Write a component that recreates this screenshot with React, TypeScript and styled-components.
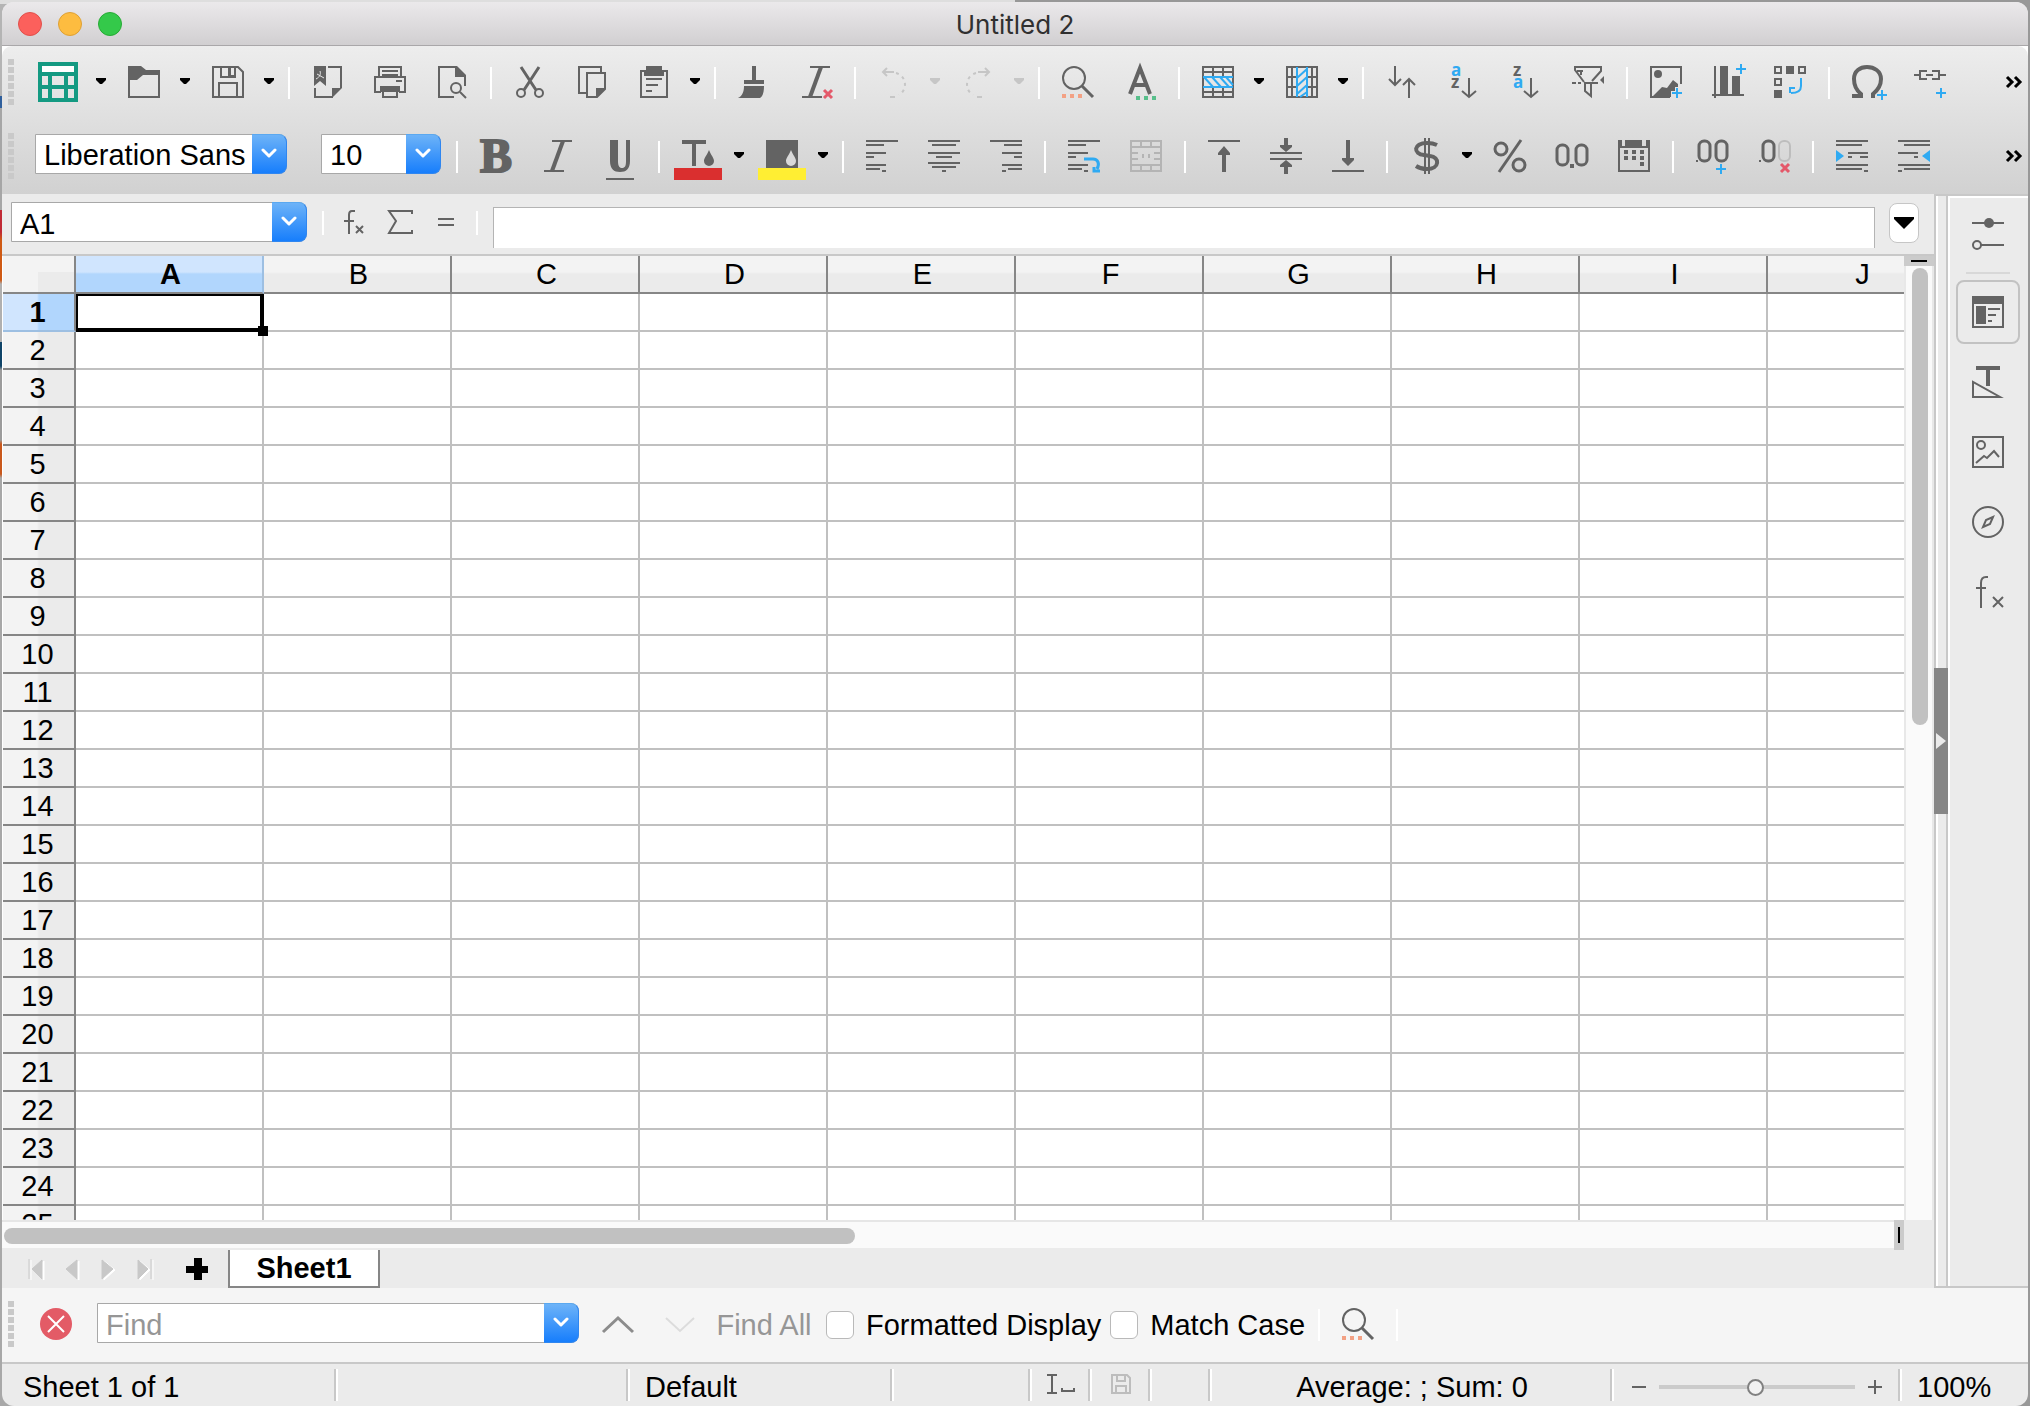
import React from "react";
import styled, { createGlobalStyle, css } from "styled-components";

const INK = "#636363";
const BLUE = "#2faaf2";
const RED = "#e4596a";
const UI_FONT = '"Liberation Sans", Arial, sans-serif';

const GlobalStyle = createGlobalStyle`
  * { box-sizing: border-box; }
  body {
    margin: 0;
    background:
      linear-gradient(to right, transparent 50%, #989898 50%),
      linear-gradient(#dedede 0 4px, #b4b4b4 4px 96px, #2f5f9c 96px 108px, #a6a6a6 108px 210px,
        #c02a35 210px 232px, #cf5a14 240px 280px, #b0b0b0 284px 342px, #0f4468 342px 366px,
        #9c9c9c 370px 440px, #c9581c 444px 474px, #a8a8a8 478px);
    overflow: hidden;
    font-family: ${UI_FONT};
  }
  button, input, select { font: inherit; color: inherit; margin: 0; }
`;

/* ---------- window frame ---------- */

const Desktop = styled.div`
  height: 100vh;
  padding: 2px 2px 0;
`;

const Window = styled.main`
  display: flex;
  flex-direction: column;
  height: 100%;
  overflow: hidden;
  border-radius: 12px;
  background: #ebebeb;
  color: #000;
  font-size: 29px;
  line-height: 32px;
`;

const TitleBar = styled.header`
  display: grid;
  grid-template-columns: 1fr auto 1fr;
  align-items: center;
  flex: none;
  height: 44px;
  padding: 0 16px;
  border-bottom: 1px solid #a9a7a9;
  background: linear-gradient(#ebe9eb, #d1cfd1);
`;

const Lights = styled.div`
  display: flex;
  gap: 16px;
`;

const Light = styled.button<{ $fill: string; $edge: string }>`
  width: 24px;
  height: 24px;
  padding: 0;
  border: 1px solid ${(p) => p.$edge};
  border-radius: 50%;
  background: ${(p) => p.$fill};
`;

const Title = styled.h1`
  margin: 0;
  padding-top: 2px;
  font: 400 26px/32px Inter, "Liberation Sans", sans-serif;
  color: #303030;
`;

/* ---------- toolbars ---------- */

const ToolbarBack = styled.div`
  flex: none;
  background: #fff;
`;

const Toolbars = styled.div`
  border-radius: 10px 10px 0 0;
  background: linear-gradient(#ededed, #d1d1d1);
`;

const ToolRow = styled.div`
  display: flex;
  align-items: center;
  height: 74px;
  padding: 0 0 2px 6px;
`;

const Grip = styled.span<{ $after: number }>`
  flex: none;
  width: 6px;
  height: 46px;
  margin-right: ${(p) => p.$after}px;
  background: repeating-linear-gradient(#c9c9c9 0 6px, transparent 6px 8px);
`;

const Separator = styled.span<{ $h?: number }>`
  flex: none;
  width: 2px;
  height: ${(p) => p.$h ?? 32}px;
  margin: 2px 7px 0;
  background: #fff;
`;

const flatButton = css`
  display: flex;
  align-items: center;
  justify-content: center;
  flex: none;
  padding: 0;
  border: 0;
  background: none;
  svg { display: block; overflow: visible; }
`;

const ToolButton = styled.button<{ $w?: number }>`
  ${flatButton}
  width: ${(p) => p.$w ?? 62}px;
  height: 48px;
`;

const ArrowButton = styled.button`
  ${flatButton}
  width: 22px;
  height: 48px;
  padding: 0 2px 2px 0;
`;

const MoreButton = styled.button`
  ${flatButton}
  width: 28px;
  height: 48px;
  margin-left: auto;
`;

/* ---------- combo boxes ---------- */

const Combo = styled.div<{ $w: number; $after?: number }>`
  position: relative;
  display: flex;
  flex: none;
  width: ${(p) => p.$w}px;
  height: 40px;
  margin-right: ${(p) => p.$after ?? 0}px;
`;

const ToolCombo = styled(Combo)`
  margin-bottom: 4px;
`;

const fieldStyle = css`
  flex: 1;
  min-width: 0;
  height: 40px;
  border: 1px solid #a8a8a8;
  border-radius: 0 8px 8px 0;
  background: #fff;
  outline: 0;
`;

const ComboSelect = styled.select`
  ${fieldStyle}
  appearance: none;
  padding: 2px 0 0 8px;
`;

const ComboInput = styled.input`
  ${fieldStyle}
  padding: 4px 0 0 8px;
  &::placeholder { color: #969696; opacity: 1; }
`;

const comboCap = css`
  position: absolute;
  top: 0;
  right: 0;
  display: flex;
  align-items: center;
  justify-content: center;
  width: 35px;
  height: 40px;
  padding: 0 0 2px;
  border: 1px solid #2f86f0;
  border-top-color: #5aa8f0;
  border-left: 0;
  border-radius: 0 8px 8px 0;
  background: linear-gradient(#6db3f8, #177efc);
`;

const ComboCap = styled.span`
  ${comboCap}
  pointer-events: none;
`;

const ComboButton = styled.button`
  ${comboCap}
`;

/* ---------- work area ---------- */

const Work = styled.div`
  display: flex;
  flex: 1;
  min-height: 0;
`;

const Document = styled.section`
  display: flex;
  flex-direction: column;
  flex: 1;
  min-width: 0;
`;

const FormulaBar = styled.div`
  display: flex;
  align-items: center;
  flex: none;
  height: 62px;
  padding: 0 15px 4px 9px;
  border-bottom: 2px solid #c8c8c8;
`;

const FormulaInput = styled.input`
  flex: 1;
  min-width: 0;
  height: 41px;
  margin: 10px 14px 0 8px;
  padding: 0 8px;
  border: 1px solid #b4b4b4;
  border-bottom: 0;
  background: #fff;
  outline: 0;
`;

const ExpandButton = styled.button`
  ${flatButton}
  width: 30px;
  height: 40px;
  margin-top: 2px;
  border: 1px solid #c6c6c6;
  border-radius: 8px;
  background: #fff;
`;

const SheetArea = styled.div`
  display: flex;
  flex: 1;
  min-height: 0;
`;

const Viewport = styled.div`
  flex: 1;
  min-width: 0;
  overflow: hidden;
  padding-left: 1px;
  background: #fff;
`;

const Sheet = styled.table`
  table-layout: fixed;
  width: 1953px;
  border-collapse: separate;
  border-spacing: 0;
  line-height: 36px;
`;

const RowHeadCol = styled.col`
  width: 73px;
`;

const Corner = styled.th`
  height: 38px;
  padding: 0;
  border: solid #868686;
  border-width: 0 2px 2px 0;
  background: linear-gradient(#ebebeb, #ebebeb) 35px 16px no-repeat #f3f3f3;
`;

const ColHead = styled.th<{ $on: boolean }>`
  height: 38px;
  padding: 0 0 0 3px;
  border: solid #868686;
  border-width: 0 2px 2px 0;
  border-right-color: ${(p) => (p.$on ? "#9dbfe2" : "#868686")};
  background: ${(p) => (p.$on ? "linear-gradient(#d0e5fe 16px, #b1d6fd 18px)" : "linear-gradient(#f3f3f3 16px, #ebebeb 18px)")};
  font-weight: ${(p) => (p.$on ? 700 : 400)};
`;

const RowHead = styled.th<{ $on: boolean }>`
  height: 38px;
  padding: 0 2px 0 0;
  border: solid #868686;
  border-width: 0 2px 2px 0;
  border-bottom-color: ${(p) => (p.$on ? "#9dbfe2" : "#868686")};
  background: ${(p) => (p.$on ? "linear-gradient(to right, #d0e5fe 34px, #b1d6fd 36px)" : "linear-gradient(to right, #f3f3f3 34px, #ebebeb 36px)")};
  font-weight: ${(p) => (p.$on ? 700 : 400)};
`;

const Cell = styled.td`
  position: relative;
  height: 38px;
  padding: 0;
  border: solid #c0c0c0;
  border-width: 0 2px 2px 0;
`;

const CellCursor = styled.span`
  position: absolute;
  z-index: 1;
  inset: 0 -2px -2px 0;
  border: solid #000;
  border-width: 2px 4px 4px 2px;
  &::after {
    content: "";
    position: absolute;
    right: -8px;
    bottom: -8px;
    width: 10px;
    height: 10px;
    background: #000;
  }
`;

const VScroll = styled.div`
  display: flex;
  flex-direction: column;
  flex: none;
  width: 30px;
  border: solid #e8e8e8;
  border-width: 0 2px;
  background: #fafafa;
`;

const VSplit = styled.div`
  display: flex;
  align-items: center;
  justify-content: center;
  flex: none;
  height: 10px;
  margin: 0 -2px 2px;
  background: #cbcbcb;
  &::after { content: ""; width: 16px; height: 2px; background: #000; }
`;

const VTrack = styled.div`
  flex: 1;
  padding-left: 6px;
`;

const VThumb = styled.div`
  width: 16px;
  height: 48%;
  border-radius: 8px;
  background: #c1c1c1;
`;

const HScroll = styled.div`
  display: flex;
  flex: none;
  height: 28px;
  padding-right: 30px;
`;

const HTrack = styled.div`
  flex: 1;
  padding: 6px 0 0 2px;
  border-top: 2px solid #e6e6e6;
  background: #fafafa;
`;

const HThumb = styled.div`
  width: 45%;
  height: 16px;
  border-radius: 8px;
  background: #c1c1c1;
`;

const HSplit = styled.div`
  display: flex;
  align-items: center;
  justify-content: center;
  flex: none;
  width: 10px;
  height: 30px;
  background: #cbcbcb;
  &::after { content: ""; width: 2px; height: 16px; background: #000; }
`;

const Tabs = styled.nav`
  display: flex;
  flex: none;
  height: 40px;
  padding: 2px 0 0 16px;
`;

const NavButton = styled.button<{ $w: number }>`
  ${flatButton}
  width: ${(p) => p.$w}px;
`;

const AddButton = styled(NavButton)`
  padding: 0 0 0 4px;
`;

const SheetTab = styled.button`
  width: 152px;
  padding: 0;
  border: 2px solid #868686;
  border-top: 0;
  background: #fff;
  font-weight: 700;
  line-height: 34px;
`;

/* ---------- sidebar ---------- */

const Splitter = styled.div`
  position: relative;
  flex: none;
  width: 16px;
  border: solid #c8c8c8;
  border-width: 2px 0;
  background: linear-gradient(to right, #c8c8c8 0 2px, #fff 2px 4px, #ebebeb 4px 12px, #c8c8c8 12px 14px, #fff 14px);
`;

const SplitHandle = styled.button`
  ${flatButton}
  position: absolute;
  top: 50%;
  left: 0;
  width: 14px;
  height: 146px;
  margin-top: -73px;
  background: #868686;
`;

const Sidebar = styled.aside`
  display: flex;
  flex-direction: column;
  align-items: center;
  flex: none;
  width: 78px;
  gap: 6px;
  padding: 6px 2px 0 0;
  border: solid #c8c8c8;
  border-width: 2px 0;
  box-shadow: inset 0 2px #fff;
`;

const DeckButton = styled.button<{ $on?: boolean }>`
  ${flatButton}
  width: 64px;
  height: 64px;
  border: 2px solid ${(p) => (p.$on ? "#c2c2c2" : "transparent")};
  border-radius: 8px;
`;

const DeckLine = styled.span`
  flex: none;
  width: 44px;
  height: 2px;
  background: #d8d8d8;
`;

/* ---------- find bar and status bar ---------- */

const FindBar = styled.div`
  display: flex;
  align-items: center;
  flex: none;
  height: 76px;
  padding: 0 0 2px 6px;
  border-bottom: 2px solid #c8c8c8;
  background: #f5f5f5;
`;

const FindCombo = styled(Combo)`
  margin: 0 8px 2px 10px;
`;

const FindAll = styled.button`
  ${flatButton}
  width: 106px;
  padding-top: 2px;
  color: #969696;
`;

const Check = styled.label`
  display: flex;
  align-items: center;
  flex: none;
  gap: 12px;
  margin-left: 9px;
  padding-top: 2px;
`;

const CheckBox = styled.input`
  appearance: none;
  width: 28px;
  height: 28px;
  border: 1px solid #b9b9b9;
  border-radius: 6px;
  background: #fff;
`;

const FindTail = styled.div`
  display: flex;
  align-items: center;
  margin-left: 6px;
`;

const StatusBar = styled.footer`
  display: flex;
  align-items: center;
  flex: none;
  height: 42px;
`;

const StatusCell = styled.div<{ $w?: number; $center?: boolean; $last?: boolean }>`
  display: flex;
  align-items: center;
  flex: ${(p) => (p.$w ? "none" : "1")};
  justify-content: ${(p) => (p.$center ? "center" : "flex-start")};
  width: ${(p) => (p.$w ? `${p.$w}px` : "auto")};
  height: 32px;
  padding: ${(p) => (p.$center ? "4px 0 0" : "4px 0 0 15px")};
  border-right: ${(p) => (p.$last ? "0" : "2px solid #fff")};
  box-shadow: ${(p) => (p.$last ? "none" : "inset -2px 0 #c8c8c8")};
`;

const StatusLead = styled(StatusCell)`
  padding-left: 21px;
`;

const StatusIcon = styled(StatusCell)`
  padding: 0 0 2px;
`;

const ZoomButton = styled.button`
  ${flatButton}
  width: 14px;
  height: 20px;
`;

const ZoomSlider = styled.input`
  appearance: none;
  width: 196px;
  height: 20px;
  margin: 0 13px;
  background: linear-gradient(#cbcbcb, #cbcbcb) center / 100% 4px no-repeat;
  &::-webkit-slider-thumb {
    appearance: none;
    width: 17px;
    height: 17px;
    border: 2px solid #808080;
    border-radius: 50%;
    background: #f2f2f2;
  }
`;

/* ---------- icons ---------- */

type IconProps = { w?: number; h?: number; c?: string; children: React.ReactNode };
const Icon = ({ w = 32, h = 32, c = INK, children }: IconProps) => (
  <svg width={w} height={h} viewBox={`0 0 ${w} ${h}`} fill="none" stroke={c} strokeWidth={2} aria-hidden="true">
    {children}
  </svg>
);

const Fill = ({ d, c = INK }: { d: string; c?: string }) => <path d={d} fill={c} stroke="none" />;
const Plus = ({ x, y }: { x: number; y: number }) => <path d={`M${x - 5} ${y}h10M${x} ${y - 5}v10`} stroke={BLUE} />;
const Cross = ({ x, y }: { x: number; y: number }) => (
  <path d={`M${x - 4} ${y - 4}l8 8M${x + 4} ${y - 4}l-8 8`} stroke={RED} strokeWidth={3} />
);
/* Each bar is [y, from, to]. */
const Bars = ({ rows }: { rows: number[][] }) => <path d={rows.map(([y, a, b]) => `M${a} ${y}H${b}`).join("")} />;

const LEFT_BARS = [[1, 0, 32], [5, 0, 18], [13, 0, 20], [17, 0, 8], [25, 0, 20], [29, 0, 14], [31, 16, 20]];

const FindGlyph = (
  <>
    <circle cx="12" cy="12" r="11" />
    <path d="M20 20L31 31" strokeWidth="3" />
    <Fill d="M0 28h4v4h-4zM8 28h4v4h-4zM16 28h4v4h-4z" c="#f3a184" />
  </>
);

const undoPaths = (
  <>
    <path d="M9 2L5 6L9 10M5 6H16" />
    <path d="M18 7A12 12 0 0 1 21 29" strokeDasharray="3 4" />
    <path d="M12 31H17" />
  </>
);

const ITALIC = "M10 1H30M2 31H22";

const Letter = ({ y, c, children }: { y: number; c: string; children: string }) => (
  <text x="3" y={y} fontFamily="Open Sans, sans-serif" fontSize="17" fontWeight="700" fill={c} stroke="none">
    {children}
  </text>
);

const art: Record<string, React.ReactNode> = {
  calc: (
    <Icon w={44} h={40} c="#149a82">
      <Fill d="M3 3H37V11H3Z" c="#fff" />
      <path d="M2 2H38V38H2Z" strokeWidth="4" />
      <path d="M2 12H38M2 25H38M12 12V38M28 12V38" strokeWidth="4" />
    </Icon>
  ),
  open: (<Icon><path d="M1 12V31H31V6" /><Fill d="M0 0H13L18 4H32V9H15L9 14H0Z" /></Icon>),
  save: (<Icon><path d="M1 1H26L31 6V31H1ZM9 1V11H23V1M7 32V17H25V32" /><Fill d="M16 1H19V9H22V1H24V12H16Z" /></Icon>),
  pdf: (
    <Icon>
      <Fill d="M2 0H14V20L8 15L2 20Z" />
      <path d="M4 13C8 11 9 8 8 5M5 8L12 12" stroke="#e6e6e6" strokeWidth="1" />
      <path d="M16 1H29V22M3 22V31H21" />
      <Fill d="M20 32V22H30Z" />
    </Icon>
  ),
  print: (
    <Icon>
      <path d="M5 11V1H27V11M8 5H24M8 9H24M7 26H1V11H31V26H25M22 15H28M9 24V31H23V24" />
      <Fill d="M6 20H26V26H6Z" />
    </Icon>
  ),
  preview: (
    <Icon>
      <path d="M18 31H3V1H20M29 9V20" />
      <Fill d="M19 0H21L30 9V11H19Z" />
      <circle cx="20" cy="22" r="5" />
      <path d="M24 26L30 32" />
    </Icon>
  ),
  cut: (<Icon><path d="M7 1L22 24M25 1L10 24" strokeWidth="3" /><circle cx="7" cy="27" r="4" /><circle cx="25" cy="27" r="4" /></Icon>),
  copy: (<Icon><path d="M10 27H3V1H25V6M11 7H29V23L21 31H11Z" /><Fill d="M20 32V22H30Z" /></Icon>),
  paste: (<Icon><path d="M3 5H29V31H3ZM8 13H24M8 19H20M8 25H14" /><Fill d="M8 0H24V4H26V10H6V4H8Z" /></Icon>),
  brush: (<Icon><Fill d="M14 0H18V14H26V18H6V14H14ZM6 20H26C26 26 25 30 22 32H0C4 30 6 26 6 20Z" /></Icon>),
  clear: (<Icon><path d={ITALIC} /><path d="M21 1L10 31" strokeWidth="4" /><Cross x={28} y={28} /></Icon>),
  undo: (<Icon c="#c6c6c6">{undoPaths}</Icon>),
  redo: (<Icon c="#c6c6c6"><g transform="matrix(-1 0 0 1 32 0)">{undoPaths}</g></Icon>),
  find: (<Icon>{FindGlyph}</Icon>),
  spell: (
    <Icon>
      <path d="M6 28L16 2L26 28M9 19H23" strokeWidth="4" />
      <Fill d="M12 30h4v4h-4zM20 30h4v4h-4zM28 30h4v4h-4z" c="#58bf8b" />
    </Icon>
  ),
  row: (
    <Icon>
      <path d="M1 1H31V31H1ZM1 6H31M1 26H31M11 1V11M21 1V11M11 21V31M21 21V31" />
      <path d="M1 11H31M1 21H31M2 11L11 21M10 11L19 21M18 11L27 21M24 11L31 19" stroke={BLUE} />
    </Icon>
  ),
  column: (
    <Icon>
      <path d="M1 1H31V31H1ZM6 1V31M26 1V31M1 11H11M1 21H11M21 11H31M21 21H31" />
      <path d="M11 1V31M21 1V31M11 12L21 3M11 20L21 11M11 28L21 19M14 31L21 26" stroke={BLUE} />
    </Icon>
  ),
  sort: (<Icon><path d="M9 0V19M3 13L9 19L15 13M23 32V13M17 19L23 13L29 19" /></Icon>),
  sortAsc: (
    <Icon>
      <Letter y={10} c={BLUE}>a</Letter>
      <Letter y={22} c={INK}>z</Letter>
      <path d="M21 12V31M14 25L21 31L28 25" />
    </Icon>
  ),
  sortDesc: (
    <Icon>
      <Letter y={10} c={INK}>z</Letter>
      <Letter y={22} c={BLUE}>a</Letter>
      <path d="M21 12V31M14 25L21 31L28 25" />
    </Icon>
  ),
  filter: (
    <Icon>
      <path d="M12 16L3 4V1H29V5L20 15M11 5H5M9 5V9M0 17H4M6 17H9M12 17H26M13 17V25L19 30V17" />
      <Fill d="M28 14L32 10V18Z" />
    </Icon>
  ),
  image: (
    <Icon>
      <path d="M31 18V1H1V31H20" />
      <circle cx="8" cy="8" r="4" fill={INK} stroke="none" />
      <Fill d="M2 31L12 21L17 22L23 14L28 18V21H25V25H21V31Z" />
      <Plus x={27} y={27} />
    </Icon>
  ),
  chart: (<Icon><path d="M3 0V32M0 29H32" /><Fill d="M8 0H16V29H8ZM20 10H28V29H20Z" /><Plus x={29} y={3} /></Icon>),
  pivot: (
    <Icon>
      <path d="M1 1H7V7H1ZM25 1H31V7H25ZM1 13H7V19H1Z" />
      <Fill d="M12 0H20V8H12ZM0 24H8V32H0Z" />
      <path d="M27 12V20C27 25 24 27 17 27M16 21V27M15 22H21" stroke={BLUE} />
    </Icon>
  ),
  omega: (
    <Icon>
      <path d="M0 30H9V28C4 24 2 20 2 13C2 5 8 1 15 1S29 5 29 13C29 20 26 24 21 28V30H23" strokeWidth="4" />
      <Plus x={30} y={29} />
    </Icon>
  ),
  link: (<Icon><path d="M0 9H6M13 5H6V13H13M12 9H19M18 5H25V13H18M25 9H32" /><Plus x={27} y={27} /></Icon>),
  bold: (
    <Icon>
      <text x="0" y="32" fontFamily="Liberation Serif, serif" fontSize="48" fontWeight="700" fill={INK} stroke={INK} strokeWidth="2">B</text>
    </Icon>
  ),
  italic: (<Icon><path d={ITALIC} /><path d="M21 1L10 31" strokeWidth="4" /></Icon>),
  underline: (<Icon><Fill d="M6 0H14V21C14 27 16 28 18 28C21 28 22 26 22 21V0H26V21C26 29 22 32 16 32C10 32 6 29 6 21ZM2 38H30V40H2Z" /></Icon>),
  fontColor: (<Icon><Fill d="M0 0H24V4H14V26H10V4H0ZM27 10C29 15 32 18 32 21A5 5 0 0 1 22 21C22 18 25 15 27 10Z" /><Fill d="M-8 28H40V40H-8Z" c="#da2f2f" /></Icon>),
  highlight: (
    <Icon>
      <Fill d="M0 0H32V28H0Z" />
      <Fill d="M25 10C27 15 30 18 30 21A5 5 0 0 1 20 21C20 18 23 15 25 10Z" c="#d9d9d9" />
      <Fill d="M-8 28H40V40H-8Z" c="#ffee33" />
    </Icon>
  ),
  left: (<Icon><Bars rows={LEFT_BARS} /></Icon>),
  center: (<Icon><Bars rows={[[1, 0, 32], [5, 4, 28], [13, 0, 32], [17, 8, 24], [23, 0, 32], [27, 4, 28], [31, 14, 18]]} /></Icon>),
  right: (<Icon><Bars rows={[[1, 0, 32], [5, 14, 32], [13, 12, 32], [17, 24, 32], [25, 12, 32], [29, 18, 32], [31, 12, 16]]} /></Icon>),
  wrap: (<Icon><Bars rows={LEFT_BARS} /><path d="M16 19H25C30 19 32 24 29 29M26 27V31H32" stroke={BLUE} strokeWidth="3" /></Icon>),
  merge: (
    <Icon c="#b4b4b4">
      <path d="M1 1H31V31H1ZM1 7H31M1 25H31M11 1V8M21 1V8M11 25V31M21 25V31M1 13H8M1 19H8M24 13H31M24 19H31M13 14V18M19 14V18" />
    </Icon>
  ),
  top: (<Icon><path d="M0 1H32" /><Fill d="M16 6L22 13V15H18V32H14V15H10V13Z" /></Icon>),
  middle: (<Icon><path d="M0 13H32M0 19H32" /><Fill d="M14 -2H18V5H22V7L16 12L10 7V5H14ZM14 34H18V27H22V25L16 20L10 25V27H14Z" /></Icon>),
  bottom: (<Icon><path d="M0 31H32" /><Fill d="M14 0H18V18H22V20L16 26L10 20V18H14Z" /></Icon>),
  currency: (<Icon><path d="M27 5C23 3 20 3 17 3C3 3 3 14 14 15L20 16C30 17 30 29 17 29C12 29 9 28 6 26" strokeWidth="4" /><path d="M15 -2V34M19 -2V34" /></Icon>),
  percent: (<Icon><g strokeWidth="3"><circle cx="7" cy="9" r="6" /><circle cx="25" cy="25" r="6" /><path d="M27 0L5 32" /></g></Icon>),
  number: (<Icon><rect x="1" y="5" width="11" height="20" rx="5" strokeWidth="3" /><rect x="20" y="5" width="11" height="20" rx="5" strokeWidth="3" /><Fill d="M14 24H18V28H14Z" /></Icon>),
  date: (
    <Icon>
      <path d="M1 4V31H31V4" />
      <Fill d="M0 0H4V6H7V0H24V6H28V0H32V8H0ZM6 10h4v4h-4zM14 10h4v4h-4zM22 10h4v4h-4zM6 16h4v4h-4zM14 16h4v4h-4zM22 16h4v4h-4zM22 22h4v4h-4z" />
    </Icon>
  ),
  addDecimal: (<Icon><rect x="3" y="1" width="11" height="20" rx="5" strokeWidth="3" /><rect x="20" y="1" width="11" height="20" rx="5" strokeWidth="3" /><Fill d="M0 20h2v2H0z" /><Plus x={25} y={29} /></Icon>),
  delDecimal: (<Icon><rect x="5" y="1" width="11" height="20" rx="5" strokeWidth="3" /><rect x="21" y="1" width="11" height="20" rx="5" strokeWidth="2" stroke="#bdbdbd" /><Fill d="M1 20h2v2H1z" /><Cross x={27} y={28} /></Icon>),
  indent: (<Icon><Bars rows={[[1, 0, 32], [5, 0, 26], [13, 12, 32], [17, 12, 16], [17, 24, 32], [25, 0, 32], [29, 0, 26], [31, 28, 32]]} /><Fill d="M0 10L8 16L0 22Z" c={BLUE} /></Icon>),
  outdent: (<Icon><Bars rows={[[1, 0, 32], [5, 6, 32], [13, 0, 20], [17, 16, 20], [25, 0, 32], [29, 6, 32], [31, 0, 4]]} /><Fill d="M32 10L24 16L32 22Z" c={BLUE} /></Icon>),
  fx: (<Icon w={24} h={24}><path d="M13 1H10C8 1 7 2 7 5V24M2 11H12M14 16L21 23M21 16L14 23" /></Icon>),
  sum: (<Icon w={26} h={24}><path d="M25 4V1H2L9 11L2 23H25V20" /></Icon>),
  equals: (<Icon w={16} h={24}><path d="M0 9H16M0 15H16" /></Icon>),
  settings: (
    <Icon>
      <path d="M0 5H32M9 27H32" />
      <circle cx="17" cy="5" r="5" fill={INK} stroke="none" />
      <circle cx="5" cy="27" r="4" />
    </Icon>
  ),
  properties: (<Icon><path d="M1 1H31V31H1ZM16 13H28M16 19H24M16 25H20" /><Fill d="M0 0H32V8H0ZM4 10H14V28H4Z" /></Icon>),
  styles: (<Icon><Fill d="M4 0H28V4H18V20H14V4H4Z" /><path d="M1 16V31H28Z" /></Icon>),
  gallery: (<Icon><path d="M1 1H31V31H1ZM4 27L12 20L15 22L22 15L27 21" /><circle cx="9" cy="9" r="4" /></Icon>),
  navigator: (<Icon><circle cx="16" cy="16" r="15" /><path d="M21 11L18 18L11 21L14 14Z" /></Icon>),
  functions: (<Icon><path d="M16 1H14C10 1 9 3 9 7V32M4 12H14M21 21L31 31M31 21L21 31" /></Icon>),
};

const Caret = ({ c = "#000" }: { c?: string }) => (
  <svg width="10" height="6" viewBox="0 0 10 6" aria-hidden="true"><path d="M0 0H10V2L6 6H4L0 2Z" fill={c} /></svg>
);
const Chevron = () => (
  <svg width="16" height="10" viewBox="0 0 16 10" fill="none" stroke="#fff" strokeWidth="3" strokeLinecap="round" strokeLinejoin="round" aria-hidden="true">
    <path d="M2 2L8 8L14 2" />
  </svg>
);
const MoreGlyph = () => (
  <svg width="16" height="12" viewBox="0 0 16 12" fill="none" stroke="#000" strokeWidth="3" aria-hidden="true">
    <path d="M1 1L6 6L1 11M9 1L14 6L9 11" />
  </svg>
);

/* ---------- toolbar contents ---------- */

type Tool = { id: string; label: string; menu?: boolean; off?: boolean } | "|";
const t = (id: string, label: string): Tool => ({ id, label });
const m = (id: string, label: string, off = false): Tool => ({ id, label, menu: true, off });

const standardTools: Tool[] = [
  m("calc", "New"), m("open", "Open"), m("save", "Save"), "|",
  t("pdf", "Export as PDF"), t("print", "Print"), t("preview", "Print Preview"), "|",
  t("cut", "Cut"), t("copy", "Copy"), m("paste", "Paste"), "|",
  t("brush", "Clone Formatting"), t("clear", "Clear Formatting"), "|",
  m("undo", "Undo", true), m("redo", "Redo", true), "|",
  t("find", "Find and Replace"), t("spell", "Spelling"), "|",
  m("row", "Row"), m("column", "Column"), "|",
  t("sort", "Sort"), t("sortAsc", "Sort Ascending"), t("sortDesc", "Sort Descending"), t("filter", "AutoFilter"), "|",
  t("image", "Insert Image"), t("chart", "Insert Chart"), t("pivot", "Pivot Table"), "|",
  t("omega", "Special Character"), t("link", "Insert Hyperlink"),
];

const formatTools: Tool[] = [
  "|", t("bold", "Bold"), t("italic", "Italic"), t("underline", "Underline"), "|",
  m("fontColor", "Font Color"), m("highlight", "Background Color"), "|",
  t("left", "Align Left"), t("center", "Align Center"), t("right", "Align Right"), "|",
  t("wrap", "Wrap Text"), t("merge", "Merge Cells"), "|",
  t("top", "Align Top"), t("middle", "Center Vertically"), t("bottom", "Align Bottom"), "|",
  m("currency", "Currency"), t("percent", "Percent"), t("number", "Number"), t("date", "Date"), "|",
  t("addDecimal", "Add Decimal Place"), t("delDecimal", "Delete Decimal Place"), "|",
  t("indent", "Increase Indent"), t("outdent", "Decrease Indent"),
];

const ToolList = ({ tools }: { tools: Tool[] }) => (
  <>
    {tools.map((tool, i) =>
      tool === "|" ? (
        <Separator key={i} />
      ) : (
        <React.Fragment key={i}>
          <ToolButton aria-label={tool.label} disabled={tool.off}>{art[tool.id]}</ToolButton>
          {tool.menu && (
            <ArrowButton aria-label={`${tool.label} options`} disabled={tool.off}>
              <Caret c={tool.off ? "#c6c6c6" : "#000"} />
            </ArrowButton>
          )}
        </React.Fragment>
      )
    )}
  </>
);

const columns = "ABCDEFGHIJ".split("");
const rows = Array.from({ length: 25 }, (_, i) => i + 1);

const navIcons: [string, string][] = [
  ["First sheet", "M1 0V20M14 1V20L4 10Z"],
  ["Previous sheet", "M13 1V20L2 10Z"],
  ["Next sheet", "M2 1V20L13 10Z"],
  ["Last sheet", "M2 1V20L12 10ZM15 0V20"],
];

const decks: [string, string][] = [
  ["properties", "Properties"], ["styles", "Styles"], ["gallery", "Gallery"],
  ["navigator", "Navigator"], ["functions", "Functions"],
];

export default function App() {
  return (
    <>
      <GlobalStyle />
      <Desktop>
        <Window>
          <TitleBar>
            <Lights>
              <Light aria-label="Close" $fill="#fc605c" $edge="#e0504b" />
              <Light aria-label="Minimize" $fill="#fdbc40" $edge="#dea034" />
              <Light aria-label="Zoom" $fill="#34c94a" $edge="#27aa35" />
            </Lights>
            <Title>Untitled 2</Title>
          </TitleBar>

          <ToolbarBack>
            <Toolbars>
              <ToolRow>
                <Grip $after={15} />
                <ToolList tools={standardTools} />
                <MoreButton aria-label="More standard tools"><MoreGlyph /></MoreButton>
              </ToolRow>
              <ToolRow>
                <Grip $after={21} />
                <ToolCombo $w={252} $after={34}>
                  <ComboSelect aria-label="Font name"><option>Liberation Sans</option></ComboSelect>
                  <ComboCap><Chevron /></ComboCap>
                </ToolCombo>
                <ToolCombo $w={120} $after={8}>
                  <ComboSelect aria-label="Font size"><option>10</option></ComboSelect>
                  <ComboCap><Chevron /></ComboCap>
                </ToolCombo>
                <ToolList tools={formatTools} />
                <MoreButton aria-label="More formatting tools"><MoreGlyph /></MoreButton>
              </ToolRow>
            </Toolbars>
          </ToolbarBack>

          <Work>
            <Document>
              <FormulaBar>
                <Combo $w={296} $after={8}>
                  <ComboInput aria-label="Name box" defaultValue="A1" />
                  <ComboButton aria-label="Named ranges"><Chevron /></ComboButton>
                </Combo>
                <Separator $h={24} />
                <ToolButton $w={46} aria-label="Function wizard">{art.fx}</ToolButton>
                <ToolButton $w={46} aria-label="Select function">{art.sum}</ToolButton>
                <ToolButton $w={46} aria-label="Formula">{art.equals}</ToolButton>
                <Separator $h={24} />
                <FormulaInput aria-label="Input line" />
                <ExpandButton aria-label="Expand formula bar">
                  <svg width="20" height="12" viewBox="0 0 20 12"><path d="M0 0H20V2L10 12L0 2Z" /></svg>
                </ExpandButton>
              </FormulaBar>

              <SheetArea>
                <Viewport>
                  <Sheet>
                    <colgroup>
                      <RowHeadCol />
                      {columns.map((c) => <col key={c} />)}
                    </colgroup>
                    <thead>
                      <tr>
                        <Corner />
                        {columns.map((c) => <ColHead key={c} scope="col" $on={c === "A"}>{c}</ColHead>)}
                      </tr>
                    </thead>
                    <tbody>
                      {rows.map((r) => (
                        <tr key={r}>
                          <RowHead scope="row" $on={r === 1}>{r}</RowHead>
                          {columns.map((c) => <Cell key={c}>{r === 1 && c === "A" && <CellCursor />}</Cell>)}
                        </tr>
                      ))}
                    </tbody>
                  </Sheet>
                </Viewport>
                <VScroll>
                  <VSplit />
                  <VTrack><VThumb /></VTrack>
                </VScroll>
              </SheetArea>

              <HScroll>
                <HTrack><HThumb /></HTrack>
                <HSplit />
              </HScroll>

              <Tabs aria-label="Sheets">
                {navIcons.map(([label, d]) => (
                  <NavButton key={label} $w={36} aria-label={label}>
                    <svg width="16" height="20" viewBox="0 0 16 20" fill="#c8c8c8" stroke="#c8c8c8" strokeWidth="2">
                      <path d={d} transform="translate(2 1)" stroke="#fff" fill="#fff" strokeWidth="1" />
                      <path d={d} strokeWidth="1" />
                    </svg>
                  </NavButton>
                ))}
                <AddButton $w={66} aria-label="Add sheet">
                  <svg width="22" height="22" viewBox="0 0 22 22"><path d="M8 0H16V8H22V15H16V22H8V15H0V8H8Z" /></svg>
                </AddButton>
                <SheetTab>Sheet1</SheetTab>
              </Tabs>
            </Document>

            <Splitter>
              <SplitHandle aria-label="Hide sidebar">
                <svg width="10" height="16" viewBox="0 0 10 16"><path d="M0 0L10 8L0 16Z" fill="#ebebeb" /></svg>
              </SplitHandle>
            </Splitter>

            <Sidebar>
              <DeckButton aria-label="Sidebar settings">{art.settings}</DeckButton>
              <DeckLine />
              {decks.map(([id, label], i) => (
                <DeckButton key={id} $on={i === 0} aria-label={label}>{art[id]}</DeckButton>
              ))}
            </Sidebar>
          </Work>

          <FindBar>
            <Grip $after={11} />
            <ToolButton aria-label="Close find bar">
              <svg width="32" height="32" viewBox="0 0 32 32">
                <circle cx="16" cy="16" r="16" fill="#e35b66" />
                <path d="M8 8L24 24M24 8L8 24" stroke="#fff" strokeWidth="2" />
              </svg>
            </ToolButton>
            <FindCombo $w={482}>
              <ComboInput aria-label="Find" placeholder="Find" />
              <ComboButton aria-label="Find history"><Chevron /></ComboButton>
            </FindCombo>
            <ToolButton aria-label="Find previous">
              <Icon c="#8c8c8c"><path d="M1 24L16 10L31 24" strokeWidth="3" /></Icon>
            </ToolButton>
            <ToolButton aria-label="Find next">
              <Icon c="#dcdcdc"><path d="M2 10L16 23L30 10" /></Icon>
            </ToolButton>
            <FindAll>Find All</FindAll>
            <Check><CheckBox type="checkbox" />Formatted Display</Check>
            <Check><CheckBox type="checkbox" />Match Case</Check>
            <FindTail>
              <Separator />
              <ToolButton aria-label="Find and replace">{art.find}</ToolButton>
              <Separator />
            </FindTail>
          </FindBar>

          <StatusBar>
            <StatusLead $w={336}>Sheet 1 of 1</StatusLead>
            <StatusCell $w={292} />
            <StatusCell $w={264}>Default</StatusCell>
            <StatusCell $w={138} />
            <StatusIcon $w={60} $center>
              <Icon w={28} h={20}><path d="M0 1H10M0 19H10M5 1V19M15 14V17H27V14" /></Icon>
            </StatusIcon>
            <StatusIcon $w={60} $center>
              <Icon w={20} h={20} c="#bdbdbd"><path d="M1 1H16L19 4V19H1ZM6 1V7H14V1M5 19V12H15V19" /></Icon>
            </StatusIcon>
            <StatusCell $w={60} />
            <StatusCell $center>Average: ; Sum: 0</StatusCell>
            <StatusCell $w={288} $center>
              <ZoomButton aria-label="Zoom out"><Icon w={14} h={14}><path d="M0 7H14" /></Icon></ZoomButton>
              <ZoomSlider type="range" aria-label="Zoom" min={0} max={100} defaultValue={49} />
              <ZoomButton aria-label="Zoom in"><Icon w={14} h={14}><path d="M0 7H14M7 0V14" /></Icon></ZoomButton>
            </StatusCell>
            <StatusCell $w={126} $last>100%</StatusCell>
          </StatusBar>
        </Window>
      </Desktop>
    </>
  );
}
